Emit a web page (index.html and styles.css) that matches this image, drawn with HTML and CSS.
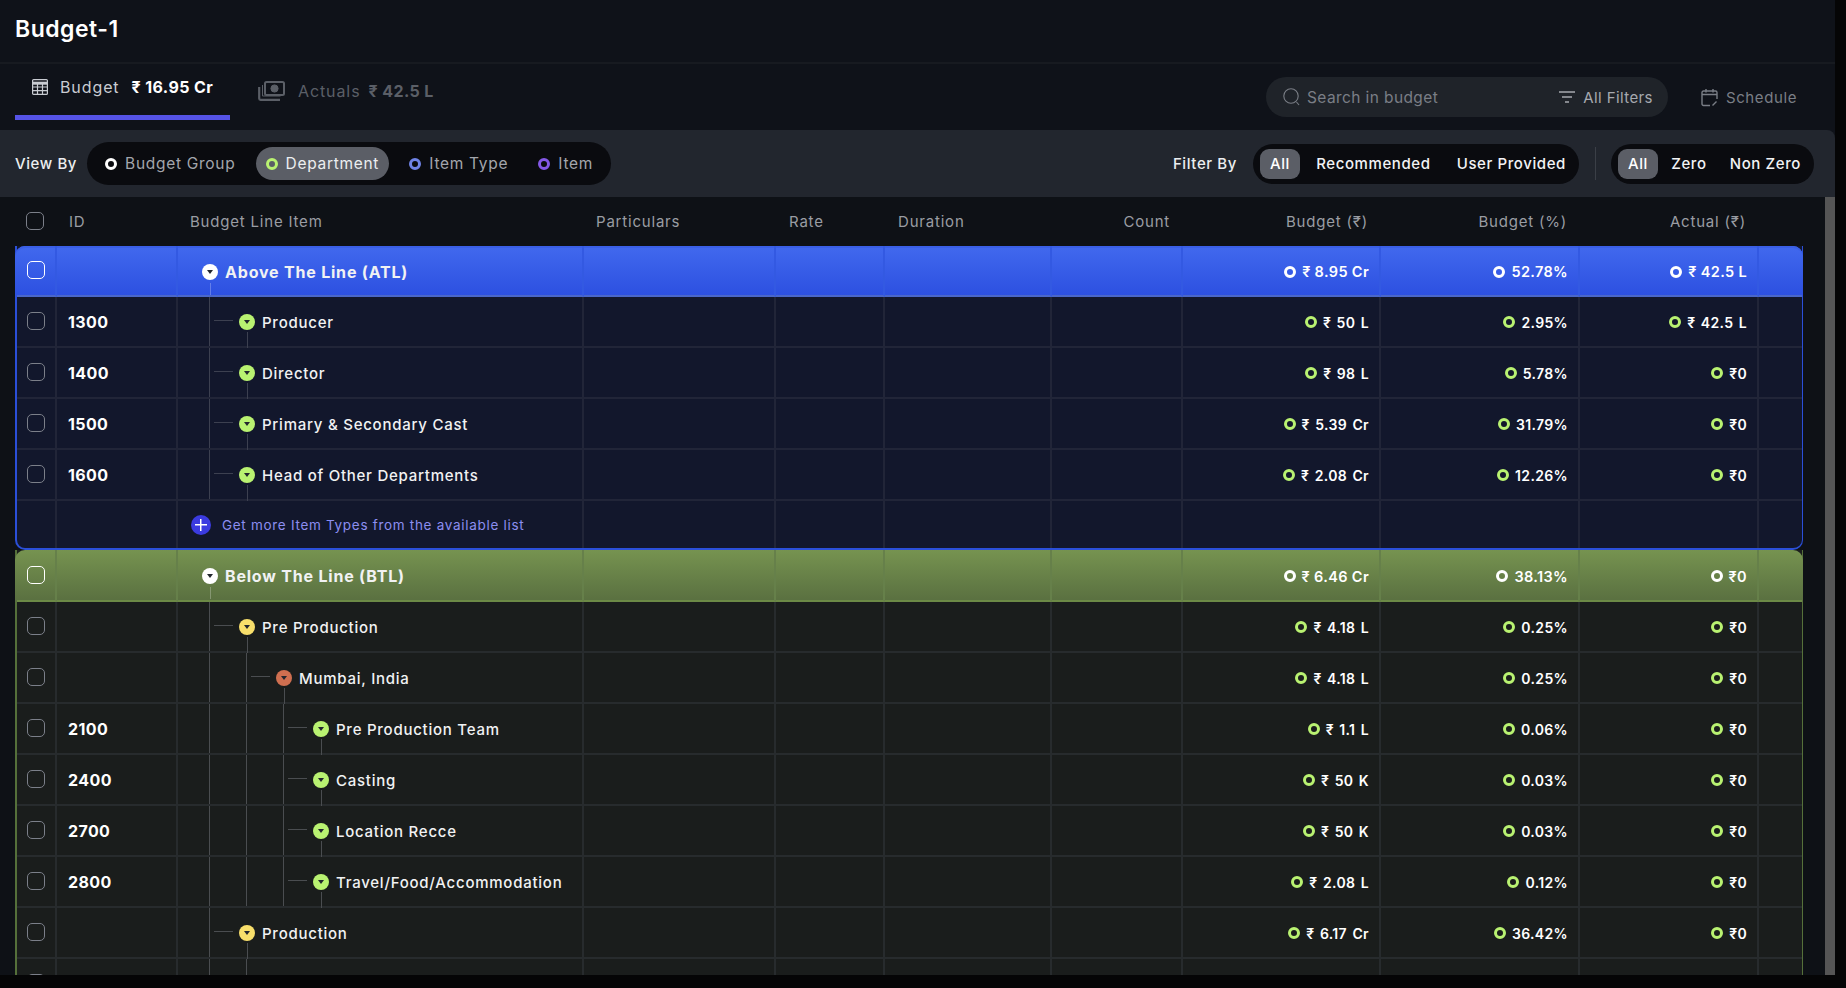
FILE: index.html
```html
<!DOCTYPE html>
<html lang="en">
<head>
<meta charset="utf-8">
<title>Budget-1</title>
<link rel="stylesheet" href="styles.css">
</head>
<body>
<div class="app">
  <header class="titlebar"><h1>Budget-1</h1></header>
  <nav class="tabs">
    <div class="tab active">
      <svg class="ic-table" viewBox="0 0 16 16" fill="none" stroke="currentColor" stroke-width="1.2"><rect x=".6" y=".6" width="14.8" height="14.8" rx="1"/><path d="M.6 4.2h14.8" stroke-width="3"/><path d="M.6 8h14.8M.6 11.7h14.8M5.5 5v10M10.5 5v10"/></svg>
      <span class="tab-label">Budget</span><b class="tab-sum">₹ 16.95 Cr</b>
    </div>
    <div class="tab muted">
      <svg class="ic-money" viewBox="0 0 27 20" fill="none" stroke="currentColor"><rect x="7" y="1" width="19" height="13" rx="1.5" stroke-width="2"/><circle cx="16.5" cy="7.5" r="3.6" fill="currentColor"/><path d="M1.2 6v11.5a1.3 1.3 0 0 0 1.3 1.3H22" stroke-width="2.2"/><path d="M4.500 4v11h18" stroke-width="1"/></svg>
      <span class="tab-label">Actuals</span><b class="tab-sum">₹ 42.5 L</b>
    </div>
    <div class="tools">
      <div class="search">
        <svg class="ic-search" viewBox="0 0 17 18" fill="none" stroke="currentColor" stroke-width="1.1"><circle cx="8" cy="8" r="7.200"/><path d="M13.500 14l2.500 3"/></svg>
        <span class="search-text">Search in budget</span>
        <span class="filters">
          <svg class="ic-filter" viewBox="0 0 16 12" fill="none" stroke="currentColor" stroke-width="1.5"><path d="M0 1h16M3 6h10M6 11h4"/></svg>All Filters
        </span>
      </div>
      <div class="schedule">
        <svg class="ic-cal" viewBox="0 0 17 19" fill="none" stroke="currentColor" stroke-width="1.400"><path d="M9 17.500H2.500a1.500 1.500 0 0 1-1.500-1.500V4.500A1.500 1.500 0 0 1 2.500 3h12A1.500 1.500 0 0 1 16 4.500V11M1 6.500h15M5 1v3.500M12 1v3.500M11.500 17.500l4-4"/></svg>Schedule
      </div>
    </div>
  </nav>
  <section class="toolbar">
    <span class="tool-label">View By</span>
    <div class="pill view">
      <span class="opt"><i class="ring white"></i>Budget Group</span>
      <span class="opt on"><i class="ring green"></i>Department</span>
      <span class="opt"><i class="ring blue"></i>Item Type</span>
      <span class="opt"><i class="ring purple"></i>Item</span>
    </div>
    <span class="tool-label filter-label">Filter By</span>
    <div class="pill seg source">
      <span class="chip">All</span><span class="seg-opt">Recommended</span><span class="seg-opt">User Provided</span>
    </div>
    <span class="divider"></span>
    <div class="pill seg amount">
      <span class="chip">All</span><span class="seg-opt">Zero</span><span class="seg-opt">Non Zero</span>
    </div>
  </section>
  <main class="body">
    <div class="sheet">
      <div class="head">
        <div class="hc first"><span class="cb"></span></div>
        <div class="hc id-h">ID</div>
        <div class="hc item-h">Budget Line Item</div>
        <div class="hc item-h">Particulars</div>
        <div class="hc rate-h">Rate</div>
        <div class="hc rate-h">Duration</div>
        <div class="hc num">Count</div>
        <div class="hc num">Budget (₹)</div>
        <div class="hc num">Budget (%)</div>
        <div class="hc num">Actual (₹)</div>
        <div class="hc"></div>
      </div>

      <div class="section atl">
        <div class="row group">
          <div class="cell chk"><span class="cb"></span></div><div class="cell"></div>
          <div class="cell tree l0"><span class="node white"></span><span class="gname">Above The Line (ATL)</span></div>
          <div class="cell"></div><div class="cell"></div><div class="cell"></div><div class="cell"></div>
          <div class="cell val"><i class="ring white"></i>₹ 8.95 Cr</div><div class="cell val"><i class="ring white"></i>52.78%</div><div class="cell val"><i class="ring white"></i>₹ 42.5 L</div><div class="cell"></div>
        </div>
        <div class="row">
          <div class="cell chk"><span class="cb"></span></div><div class="cell idc">1300</div>
          <div class="cell tree l1"><span class="node green"></span><span class="name">Producer</span></div>
          <div class="cell"></div><div class="cell"></div><div class="cell"></div><div class="cell"></div>
          <div class="cell val"><i class="ring green"></i>₹ 50 L</div><div class="cell val"><i class="ring green"></i>2.95%</div><div class="cell val"><i class="ring green"></i>₹ 42.5 L</div><div class="cell"></div>
        </div>
        <div class="row">
          <div class="cell chk"><span class="cb"></span></div><div class="cell idc">1400</div>
          <div class="cell tree l1"><span class="node green"></span><span class="name">Director</span></div>
          <div class="cell"></div><div class="cell"></div><div class="cell"></div><div class="cell"></div>
          <div class="cell val"><i class="ring green"></i>₹ 98 L</div><div class="cell val"><i class="ring green"></i>5.78%</div><div class="cell val"><i class="ring green"></i>₹0</div><div class="cell"></div>
        </div>
        <div class="row">
          <div class="cell chk"><span class="cb"></span></div><div class="cell idc">1500</div>
          <div class="cell tree l1"><span class="node green"></span><span class="name">Primary &amp; Secondary Cast</span></div>
          <div class="cell"></div><div class="cell"></div><div class="cell"></div><div class="cell"></div>
          <div class="cell val"><i class="ring green"></i>₹ 5.39 Cr</div><div class="cell val"><i class="ring green"></i>31.79%</div><div class="cell val"><i class="ring green"></i>₹0</div><div class="cell"></div>
        </div>
        <div class="row">
          <div class="cell chk"><span class="cb"></span></div><div class="cell idc">1600</div>
          <div class="cell tree l1"><span class="node green"></span><span class="name">Head of Other Departments</span></div>
          <div class="cell"></div><div class="cell"></div><div class="cell"></div><div class="cell"></div>
          <div class="cell val"><i class="ring green"></i>₹ 2.08 Cr</div><div class="cell val"><i class="ring green"></i>12.26%</div><div class="cell val"><i class="ring green"></i>₹0</div><div class="cell"></div>
        </div>
        <div class="row add">
          <div class="cell"></div><div class="cell"></div>
          <div class="cell addc"><span class="plus"></span><span class="add-text">Get more Item Types from the available list</span></div>
          <div class="cell"></div><div class="cell"></div><div class="cell"></div><div class="cell"></div><div class="cell"></div><div class="cell"></div><div class="cell"></div><div class="cell"></div>
        </div>
      </div>

      <div class="section btl">
        <div class="row group">
          <div class="cell chk"><span class="cb"></span></div><div class="cell"></div>
          <div class="cell tree l0"><span class="node white"></span><span class="gname">Below The Line (BTL)</span></div>
          <div class="cell"></div><div class="cell"></div><div class="cell"></div><div class="cell"></div>
          <div class="cell val"><i class="ring white"></i>₹ 6.46 Cr</div><div class="cell val"><i class="ring white"></i>38.13%</div><div class="cell val"><i class="ring white"></i>₹0</div><div class="cell"></div>
        </div>
        <div class="row">
          <div class="cell chk"><span class="cb"></span></div><div class="cell idc"></div>
          <div class="cell tree l1"><span class="node yellow"></span><span class="name">Pre Production</span></div>
          <div class="cell"></div><div class="cell"></div><div class="cell"></div><div class="cell"></div>
          <div class="cell val"><i class="ring green"></i>₹ 4.18 L</div><div class="cell val"><i class="ring green"></i>0.25%</div><div class="cell val"><i class="ring green"></i>₹0</div><div class="cell"></div>
        </div>
        <div class="row">
          <div class="cell chk"><span class="cb"></span></div><div class="cell idc"></div>
          <div class="cell tree l2"><span class="node orange"></span><span class="name">Mumbai, India</span></div>
          <div class="cell"></div><div class="cell"></div><div class="cell"></div><div class="cell"></div>
          <div class="cell val"><i class="ring green"></i>₹ 4.18 L</div><div class="cell val"><i class="ring green"></i>0.25%</div><div class="cell val"><i class="ring green"></i>₹0</div><div class="cell"></div>
        </div>
        <div class="row">
          <div class="cell chk"><span class="cb"></span></div><div class="cell idc">2100</div>
          <div class="cell tree l3"><span class="node green"></span><span class="name">Pre Production Team</span></div>
          <div class="cell"></div><div class="cell"></div><div class="cell"></div><div class="cell"></div>
          <div class="cell val"><i class="ring green"></i>₹ 1.1 L</div><div class="cell val"><i class="ring green"></i>0.06%</div><div class="cell val"><i class="ring green"></i>₹0</div><div class="cell"></div>
        </div>
        <div class="row">
          <div class="cell chk"><span class="cb"></span></div><div class="cell idc">2400</div>
          <div class="cell tree l3"><span class="node green"></span><span class="name">Casting</span></div>
          <div class="cell"></div><div class="cell"></div><div class="cell"></div><div class="cell"></div>
          <div class="cell val"><i class="ring green"></i>₹ 50 K</div><div class="cell val"><i class="ring green"></i>0.03%</div><div class="cell val"><i class="ring green"></i>₹0</div><div class="cell"></div>
        </div>
        <div class="row">
          <div class="cell chk"><span class="cb"></span></div><div class="cell idc">2700</div>
          <div class="cell tree l3"><span class="node green"></span><span class="name">Location Recce</span></div>
          <div class="cell"></div><div class="cell"></div><div class="cell"></div><div class="cell"></div>
          <div class="cell val"><i class="ring green"></i>₹ 50 K</div><div class="cell val"><i class="ring green"></i>0.03%</div><div class="cell val"><i class="ring green"></i>₹0</div><div class="cell"></div>
        </div>
        <div class="row">
          <div class="cell chk"><span class="cb"></span></div><div class="cell idc">2800</div>
          <div class="cell tree l3"><span class="node green"></span><span class="name">Travel/Food/Accommodation</span></div>
          <div class="cell"></div><div class="cell"></div><div class="cell"></div><div class="cell"></div>
          <div class="cell val"><i class="ring green"></i>₹ 2.08 L</div><div class="cell val"><i class="ring green"></i>0.12%</div><div class="cell val"><i class="ring green"></i>₹0</div><div class="cell"></div>
        </div>
        <div class="row">
          <div class="cell chk"><span class="cb"></span></div><div class="cell idc"></div>
          <div class="cell tree l1"><span class="node yellow"></span><span class="name">Production</span></div>
          <div class="cell"></div><div class="cell"></div><div class="cell"></div><div class="cell"></div>
          <div class="cell val"><i class="ring green"></i>₹ 6.17 Cr</div><div class="cell val"><i class="ring green"></i>36.42%</div><div class="cell val"><i class="ring green"></i>₹0</div><div class="cell"></div>
        </div>
        <div class="row">
          <div class="cell chk"><span class="cb"></span></div><div class="cell idc"></div>
          <div class="cell tree l2"></div>
          <div class="cell"></div><div class="cell"></div><div class="cell"></div><div class="cell"></div><div class="cell"></div><div class="cell"></div><div class="cell"></div><div class="cell"></div>
        </div>
      </div>
    </div>
    <div class="scrollbar"></div>
  </main>
</div>
</body>
</html>
```

FILE: styles.css
```css
* { box-sizing: border-box; }
html, body { margin: 0; height: 100%; overflow: hidden; }
body {
  background: #050506;
  color: #fff;
  font-family: Inter, "Noto Sans", "DejaVu Sans", sans-serif;
  letter-spacing: .6px;
}
.app {
  width: 1835px;
  height: 975px;
  background: #0f1219;
  display: flex;
  flex-direction: column;
  overflow: hidden;
}

/* Title */
.titlebar {
  height: 64px;
  flex: none;
  padding: 0 15px;
  display: flex;
  align-items: center;
  border-bottom: 2px solid #171a20;
}
.titlebar h1 { margin: -4px 0 0; font-size: 23px; font-weight: 600; letter-spacing: .5px; }

/* Tabs */
.tabs { height: 66px; flex: none; display: flex; }
.tab {
  height: 56px;
  margin-left: 15px;
  width: 215px;
  padding-left: 17px;
  display: flex;
  align-items: center;
  font-size: 16px;
  letter-spacing: .9px;
  border-bottom: 5px solid transparent;
  white-space: nowrap;
}
.tab.active { border-bottom-color: #5553e6; color: #c9ccd2; padding-bottom: 6px; padding-top: 1px; }
.tab.muted { color: #5b5f67; margin-left: 13px; padding-left: 15px; padding-top: 2px; width: 200px; }
.tab-label { margin-left: 12px; }
.tab-sum { margin-left: 12px; font-weight: 700; color: #fff; letter-spacing: .4px; }
.tab.muted .tab-sum { color: #5b5f67; margin-left: 8px; }
.ic-table { width: 16px; height: 16px; }
.ic-money { width: 27px; height: 20px; margin-right: 1px; }

.tools { margin-left: auto; display: flex; align-items: flex-start; padding-top: 13px; padding-right: 38px; }
.search {
  width: 402px;
  height: 40px;
  border-radius: 20px;
  background: #1f2329;
  display: flex;
  align-items: center;
  padding: 0 15px 0 17px;
  color: #7a7e86;
  font-size: 15.500px;
  letter-spacing: .4px;
}
.ic-search { width: 17px; height: 18px; }
.search-text { margin-left: 7px; }
.filters { margin-left: auto; display: flex; align-items: center; color: #a6a9af; font-size: 15px; letter-spacing: .4px; }
.ic-filter { width: 16px; height: 12px; margin-right: 8px; }
.schedule { margin-left: 33px; height: 40px; display: flex; align-items: center; color: #7a7e86; font-size: 15px; }
.ic-cal { width: 17px; height: 19px; margin-right: 8px; }

/* Toolbar */
.toolbar {
  height: 67px;
  flex: none;
  background: #22262e;
  border-top-right-radius: 8px;
  display: flex;
  align-items: center;
  padding: 0 21px 0 15px;
}
.tool-label { font-size: 15px; font-weight: 500; color: #eceef0; }
.filter-label { margin-left: auto; margin-right: 16px; }
.pill { background: #0a0b0f; display: flex; align-items: center; }
.pill.view { height: 43px; margin-left: 10px; width: 524px; border-radius: 22px; padding: 0 8px; justify-content: space-between; }
.opt {
  height: 33px;
  padding: 0 10px;
  border-radius: 17px;
  display: flex;
  align-items: center;
  gap: 8px;
  font-size: 15.500px;
  letter-spacing: .7px;
  color: #a3a6ac;
  white-space: nowrap;
}
.opt.on { background: #5b5e66; color: #eceef0; }
.ring {
  display: inline-block;
  flex: none;
  width: 12px;
  height: 12px;
  border-radius: 50%;
  border: 3px solid #fff;
}
.ring.green { border-color: #b9f271; }
.ring.blue { border-color: #6f83e6; }
.ring.purple { border-color: #8458e6; }
.pill.seg { height: 40px; border-radius: 20px; padding: 0 3px 0 7px; font-size: 15px; font-weight: 500; justify-content: space-between; }
.pill.source { width: 326px; }
.pill.amount { width: 203px; }
.chip {
  width: 40px;
  height: 30px;
  border-radius: 9px;
  background: #5b5e66;
  display: flex;
  align-items: center;
  justify-content: center;
}
.seg-opt { padding: 0 10px; white-space: nowrap; color: #f2f3f5; }
.divider { width: 1px; height: 33px; background: #3b3f47; margin: 0 15px 0 16px; }

/* Sheet */
.body { flex: 1; min-height: 0; display: flex; background: #0e1116; }
.sheet { width: 1825px; flex: none; padding-left: 15px; overflow: hidden; }
.scrollbar { width: 10px; flex: none; background: #555; }
.head, .row {
  display: grid;
  grid-template-columns: 40px 121px 406px 192px 109px 167px 131px 198px 199px 179px 43px;
}
.head { width: 1788px; height: 49px; padding: 0 1px 0 2px; font-size: 15px; letter-spacing: .8px; color: #9a9da3; }
.hc { display: flex; align-items: center; height: 49px; white-space: nowrap; }
.hc.first { padding: 0 0 2px 9px; }
.id-h { padding-left: 12px; }
.item-h { padding-left: 12px; }
.rate-h { padding-left: 13px; }
.num { justify-content: flex-end; padding-right: 13px; }
.cb {
  display: block;
  width: 18px;
  height: 18px;
  border-radius: 5px;
  border: 1.5px solid #7b7f89;
}
.section { width: 1788px; border-left: 2px solid; border-right: 1px solid; }
.atl { border-color: #2b4fd8; background: #12172c; border-bottom: 2px solid #2b4fd8; border-radius: 0 0 10px 10px; --line: #212538; --guide: #3c4050; }
.btl { border-color: #55703a; background: #1a1d1c; --line: #272b2d; --guide: #4a4d50; }
.row { height: 51px; }
.row.add { height: 47px; }
.cell {
  border-right: 2px solid var(--line);
  border-bottom: 2px solid var(--line);
  display: flex;
  align-items: center;
  min-width: 0;
}
.row.add .cell { border-bottom: 0; }
.row .cell:last-child { border-right: 0; }
.chk { padding: 0 0 2px 10px; }
.idc { padding: 1px 0 0 11px; font-size: 16px; font-weight: 700; letter-spacing: .4px; }
.val { justify-content: flex-end; padding: 1px 10px 0 0; gap: 6px; font-size: 14px; font-weight: 600; letter-spacing: .35px; word-spacing: 1.500px; white-space: nowrap; }

/* Group header rows */
.group { margin: 0 -1px 0 -2px; width: 1788px; padding: 0 1px 0 2px; height: 51px; }
.atl .group { background: linear-gradient(#4169ee, #2c4fe0); border-radius: 10px 10px 0 0; box-shadow: inset 0 2px 0 #3a5fe6; }
.btl .group { background: linear-gradient(#769350, #596f40); border-radius: 10px 10px 0 0; height: 52px; }
.atl .group .cell { --line: #3359e2; border-bottom-color: #4a67c9; }
.btl .group .cell { --line: #66804a; border-bottom-color: #6c8a46; }
.group .cb { border-color: #fff; }
.group .chk { padding-bottom: 1px; }
.btl .group .chk { padding-bottom: 0; }
.group .val { font-size: 14.500px; padding-top: 2px; word-spacing: 0; }
.gname { font-size: 16px; font-weight: 700; margin-left: 7px; letter-spacing: .8px; }

/* Tree column */
.tree { position: relative; padding-top: 1px; font-size: 15px; letter-spacing: .75px; color: #f1f2f3; white-space: nowrap; }
.l0 { padding-left: 24px; padding-top: 2px; }
.l1 { padding-left: 61px; background: linear-gradient(var(--guide), var(--guide)) 31px 0 / 1px 100% no-repeat; }
.l2 {
  padding-left: 98px;
  background:
    linear-gradient(var(--guide), var(--guide)) 31px 0 / 1px 100% no-repeat,
    linear-gradient(var(--guide), var(--guide)) 68px 0 / 1px 100% no-repeat;
}
.l3 {
  padding-left: 135px;
  background:
    linear-gradient(var(--guide), var(--guide)) 31px 0 / 1px 100% no-repeat,
    linear-gradient(var(--guide), var(--guide)) 68px 0 / 1px 100% no-repeat,
    linear-gradient(var(--guide), var(--guide)) 105px 0 / 1px 100% no-repeat;
}
.node {
  position: relative;
  flex: none;
  width: 16px;
  height: 16px;
  border-radius: 50%;
  background: #b9f271;
}
.node::before {
  content: "";
  position: absolute;
  left: 5px;
  top: 6px;
  border-left: 3px solid transparent;
  border-right: 3px solid transparent;
  border-top: 4px solid #22262e;
}
.node::after {
  content: "";
  position: absolute;
  left: 7.500px;
  top: 18px;
  width: 1px;
  height: 16px;
  background: var(--guide);
}
.name { font-weight: 500; }
.tree:not(.l0) .name { margin-left: 7px; }
.l1::after, .l2::after, .l3::after {
  content: "";
  position: absolute;
  top: 23px;
  width: 19px;
  height: 1px;
  background: var(--guide);
}
.l1::after { left: 36px; }
.l2::after { left: 73px; }
.l3::after { left: 110px; }
.row:last-child .l2::after { display: none; }
.node.white { background: #fff; }
.node.yellow { background: #f8df6b; }
.node.orange { background: #cf6f50; }
.l0 .node::after { background: rgba(255,255,255,.25); top: 19px; height: 12px; }

/* Add row */
.addc { padding: 1px 0 0 13px; }
.plus {
  position: relative;
  flex: none;
  width: 20px;
  height: 20px;
  border-radius: 50%;
  background: linear-gradient(#fff, #fff) center / 12px 1.500px no-repeat, linear-gradient(#fff, #fff) center / 1.500px 12px no-repeat, #3b3be0;
}
.add-text { margin-left: 11px; font-size: 13.500px; letter-spacing: .7px; color: #8c8ef0; white-space: nowrap; }
```
